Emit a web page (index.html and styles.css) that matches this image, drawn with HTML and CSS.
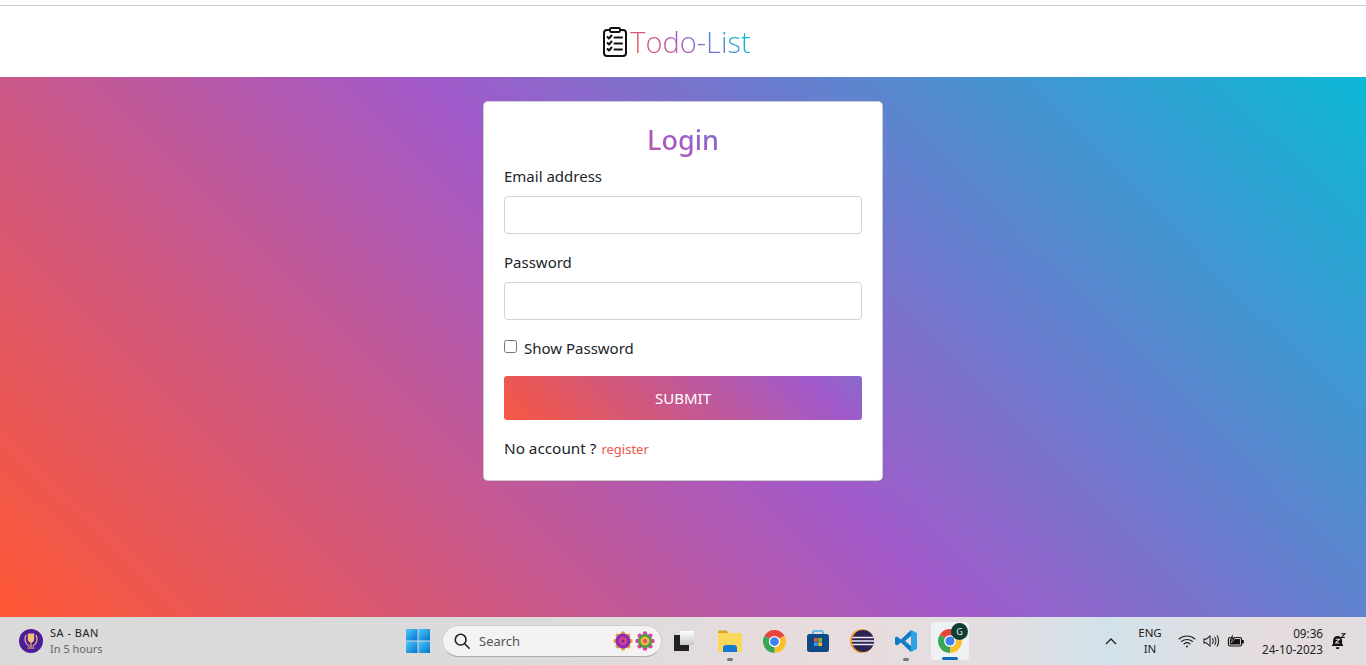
FILE: index.html
```html
<!DOCTYPE html>
<html lang="en">
<head>
    <meta charset="UTF-8">
    <meta name="viewport" content="width=device-width, initial-scale=1.0">
    <title>Todo-List</title>
    <link rel="stylesheet" href="styles.css">
</head>
<body>

    <svg class="defs" width="0" height="0">
        <defs>
            <linearGradient id="winBlue" x1="0" y1="0" x2="1" y2="1">
                <stop offset="0" stop-color="#4fc8f8"/>
                <stop offset="1" stop-color="#0573cf"/>
            </linearGradient>
            <linearGradient id="taskTile" x1="0" y1="0" x2="0" y2="1">
                <stop offset="0" stop-color="#fff"/>
                <stop offset="1" stop-color="#c9c9c9"/>
            </linearGradient>
            <symbol id="chrome" viewBox="0 0 24 24">
                <path d="M12 12L2.470 6.500A11 11 0 0 1 21.530 6.500Z" fill="#e5453a"/>
                <path d="M12 12L21.530 6.500A11 11 0 0 1 12 23Z" fill="#fbc02d"/>
                <path d="M12 12L12 23A11 11 0 0 1 2.470 6.500Z" fill="#3aa655"/>
                <circle cx="12" cy="12" r="5.400" fill="#fff"/>
                <circle cx="12" cy="12" r="4.200" fill="#3f82ee"/>
            </symbol>
            <symbol id="petals" viewBox="-10 -10 20 20">
                <circle r="2.200" cx="0" cy="-7.500"/>
                <circle r="2.200" cx="5.300" cy="-5.300"/>
                <circle r="2.200" cx="7.500" cy="0"/>
                <circle r="2.200" cx="5.300" cy="5.300"/>
                <circle r="2.200" cx="0" cy="7.500"/>
                <circle r="2.200" cx="-5.300" cy="5.300"/>
                <circle r="2.200" cx="-7.500" cy="0"/>
                <circle r="2.200" cx="-5.300" cy="-5.300"/>
            </symbol>
        </defs>
    </svg>

    <header class="site-header">
        <svg class="clipboard" viewBox="0 0 24 30" width="24" height="30" fill="none" stroke="#111" stroke-width="2" stroke-linecap="round" stroke-linejoin="round">
            <rect x="1" y="3" width="22" height="26" rx="3"/>
            <rect x="7" y="1" width="10" height="4" rx="1.200" fill="#fff"/>
            <path d="M4.500 10l1.500 1.500 2.500-3M11.500 10.500h7.500M4.500 16l1.500 1.500 2.500-3M11.500 16.500h7.500M4.500 22l1.500 1.500 2.500-3M11.500 22.500h7.500"/>
        </svg>
        <span class="brand">Todo-List</span>
    </header>

    <main class="hero">
        <div class="card">
            <h2 class="card-title">Login</h2>

            <label class="field-label" for="email">Email address</label>
            <input class="field" type="email" id="email">

            <label class="field-label field-label-second" for="password">Password</label>
            <input class="field" type="password" id="password">

            <label class="check-row" for="show">
                <input class="check" type="checkbox" id="show">
                <span>Show Password</span>
            </label>

            <button class="submit">SUBMIT</button>

            <p class="no-account">No account ? <a class="register" href="#">register</a></p>
        </div>
    </main>

    <footer class="taskbar">
        <div class="weather">
            <svg viewBox="0 0 24 24" width="24" height="24">
                <circle cx="12" cy="12" r="12" fill="#4c1d96"/>
                <path d="M8.800 4.500h6.400v5.500c0 2.200-1.300 3.600-3.200 3.600s-3.200-1.400-3.200-3.600z" fill="#f0c27a"/>
                <path d="M6.800 6.500c-1.800 3.500-.8 8 3.200 10.500M17.200 6.500c1.800 3.500.8 8-3.200 10.500M12 13.500v4M9 19h6" fill="none" stroke="#f0c27a" stroke-width="1.200" stroke-linecap="round"/>
            </svg>
            <div class="weather-text">
                <div class="weather-title">SA - BAN</div>
                <div class="weather-sub">In 5 hours</div>
            </div>
        </div>

        <div class="task-icons">
            <div class="slot">
                <svg viewBox="0 0 24 24" width="24" height="24" fill="url(#winBlue)">
                    <rect width="11.500" height="11.500"/>
                    <rect x="12.500" width="11.500" height="11.500"/>
                    <rect y="12.500" width="11.500" height="11.500"/>
                    <rect x="12.500" y="12.500" width="11.500" height="11.500"/>
                </svg>
            </div>
            <div class="search">
                <svg viewBox="0 0 20 20" width="18" height="18" fill="none" stroke="#222" stroke-width="1.800" stroke-linecap="round">
                    <circle cx="8.500" cy="8.500" r="6"/>
                    <path d="M13 13l5 5"/>
                </svg>
                <span class="search-text">Search</span>
                <div class="flowers">
                    <svg class="flower" viewBox="0 0 20 20" width="20" height="20">
                        <use href="#petals" width="20" height="20" fill="#e8a33a"/>
                        <circle cx="10" cy="10" r="7.500" fill="#8e2bb8"/>
                        <circle cx="10" cy="10" r="4" fill="#d4478a"/>
                        <circle cx="10" cy="10" r="1.500" fill="#7a1fa0"/>
                    </svg>
                    <svg class="flower" viewBox="0 0 20 20" width="20" height="20">
                        <use href="#petals" width="20" height="20" fill="#dd3ea4"/>
                        <circle cx="10" cy="10" r="7" fill="#43a047"/>
                        <circle cx="10" cy="10" r="4.500" fill="#f2b632"/>
                        <circle cx="10" cy="10" r="2" fill="#e0479c"/>
                    </svg>
                </div>
            </div>
            <div class="slot">
                <svg viewBox="0 0 22 22" width="22" height="22">
                    <rect x="1" y="5" width="15" height="16" fill="#222"/>
                    <rect x="7" y="1" width="14" height="14" fill="url(#taskTile)"/>
                </svg>
            </div>
            <div class="slot slot-first-app">
                <svg viewBox="0 0 26 24" width="26" height="24">
                    <path d="M1 3a1.500 1.500 0 0 1 1.500-1.500h7L12 4h-11z" fill="#d9a520"/>
                    <rect x="1" y="4" width="24" height="19" rx="1.500" fill="#fbd75b"/>
                    <path d="M6 23v-4a3 3 0 0 1 3-3h8a3 3 0 0 1 3 3v4z" fill="#1479d4"/>
                </svg>
                <span class="dot"></span>
            </div>
            <div class="slot">
                <svg width="25" height="25"><use href="#chrome"/></svg>
            </div>
            <div class="slot">
                <svg viewBox="0 0 24 24" width="24" height="24">
                    <path d="M7 6V3.500A1.500 1.500 0 0 1 8.500 2h7A1.500 1.500 0 0 1 17 3.500V6" fill="none" stroke="#3fb4ea" stroke-width="1.600"/>
                    <rect x="1" y="5" width="22" height="18" rx="2.500" fill="#0f4a86"/>
                    <rect x="8" y="9" width="3.700" height="3.700" fill="#e8553a"/>
                    <rect x="12.300" y="9" width="3.700" height="3.700" fill="#7cb93a"/>
                    <rect x="8" y="13.300" width="3.700" height="3.700" fill="#2f9bea"/>
                    <rect x="12.300" y="13.300" width="3.700" height="3.700" fill="#f7b731"/>
                </svg>
            </div>
            <div class="slot">
                <svg viewBox="0 0 24 24" width="24" height="24">
                    <circle cx="12" cy="12" r="12" fill="#f0a030"/>
                    <circle cx="13" cy="12" r="11" fill="#2c2255"/>
                    <path d="M2.500 8.500h21M2 12h22M2.500 15.500h21" stroke="#efeaf5" stroke-width="1.500"/>
                </svg>
            </div>
            <div class="slot">
                <svg viewBox="0 0 24 24" width="24" height="24">
                    <path d="M17 1L7 10.500 3 7.500 1 8.800v6.400L3 16.500l4-3L17 23v-6l-6-5 6-5z" fill="#0f7cc4"/>
                    <path d="M17 1l6 3v16l-6 3z" fill="#2aa3ea"/>
                </svg>
                <span class="dot"></span>
            </div>
            <div class="slot slot-active">
                <div class="active-box">
                    <svg width="26" height="26"><use href="#chrome"/></svg>
                    <span class="profile">G</span>
                    <span class="active-bar"></span>
                </div>
            </div>
        </div>

        <div class="tray">
            <svg class="caret" viewBox="0 0 12 8" width="12" height="8" fill="none" stroke="#222" stroke-width="1.300">
                <path d="M1 7l5-5 5 5"/>
            </svg>
            <div class="lang">ENG<br>IN</div>
            <div class="tray-icons">
                <svg viewBox="0 0 18 14" width="18" height="14" fill="none" stroke="#222" stroke-width="1.100" stroke-linecap="round">
                    <path d="M1 5c4.500-4 11.500-4 16 0M3.500 7.500c3-2.700 8-2.700 11 0M6 10c1.700-1.500 4.300-1.500 6 0"/>
                    <circle cx="9" cy="12.500" r="1" fill="#222" stroke="none"/>
                </svg>
                <svg viewBox="0 0 18 14" width="17" height="14" fill="none" stroke="#222" stroke-width="1.100" stroke-linecap="round" stroke-linejoin="round">
                    <path d="M1 5v4h2.500L7.500 12.500V1.500L3.500 5zM10 4.500c1 1.500 1 3.500 0 5M12.500 3c1.500 2.500 1.500 5.500 0 8M15 1.500c2 3.500 2 7.500 0 11"/>
                </svg>
                <svg viewBox="0 0 18 14" width="18" height="14">
                    <rect x="1.500" y="3.500" width="13" height="8.500" rx="1.500" fill="none" stroke="#111" stroke-width="1.200"/>
                    <rect x="3" y="5" width="10" height="5.500" fill="#111"/>
                    <rect x="15" y="6" width="1.800" height="3.500" fill="#111"/>
                    <path d="M6 0L2.500 5h3L4 9l5-5H6z" fill="#111" stroke="#e6dfe2" stroke-width=".5"/>
                </svg>
            </div>
            <div class="clock">09:36<br>24-10-2023</div>
            <svg class="bell" viewBox="0 0 16 18" width="15" height="17">
                <path d="M7 3a4.800 4.800 0 0 0-4.800 4.800V11L.8 13.800h12.400L11.800 11V7.800A4.800 4.800 0 0 0 7 3z" fill="#111"/>
                <path d="M5 15h4a2 2 0 0 1-4 0z" fill="#111"/>
                <path d="M5 6.500h4L5 10.500h4" fill="none" stroke="#e6dfe2" stroke-width="1.100"/>
                <path d="M11 .8h3.800L11 4.800h3.800" fill="none" stroke="#111" stroke-width="1.100"/>
            </svg>
        </div>
    </footer>

</body>
</html>
```

FILE: styles.css
```css
* {
    box-sizing: border-box;
}
html, body {
    height: 100%;
}
body {
    font-family: "Noto Sans", "Open Sans", sans-serif;
    background-color: white;
    color: #212529;
    margin: 0;
    display: flex;
    flex-direction: column;
    overflow: hidden;
}
.defs {
    position: absolute;
}
.site-header {
    flex: none;
    height: 72px;
    margin-top: 5px;
    padding: 1px 12px 0 0;
    border-top: 1px solid #ccc;
    display: flex;
    align-items: center;
    justify-content: center;
    gap: 3px;
    background: white;
}
.brand {
    font-family: "Open Sans", sans-serif;
    font-weight: 300;
    font-size: 29px;
    line-height: 30px;
    background: linear-gradient(45deg, #ff5733, #a259c9 45%, #0bb8d5 88%);
    -webkit-background-clip: text;
    background-clip: text;
    color: transparent;
}
.hero {
    flex: 1;
    padding-top: 24px;
    background: linear-gradient(45deg, #ff5733, #a259c9, #0bb8d5);
}
.card {
    width: 400px;
    height: 380px;
    margin: 0 auto;
    padding: 20px;
    background: white;
    border: 1px solid rgba(0, 0, 0, .2);
    border-radius: 5px;
}
.card-title {
    margin: 0 0 7px;
    padding-top: 1px;
    text-align: center;
    font-size: 27px;
    font-weight: 500;
    line-height: 34px;
    background: linear-gradient(45deg, #ff5733, #a259c9, #0bb8d5);
    -webkit-background-clip: text;
    background-clip: text;
    color: transparent;
}
.field-label {
    display: block;
    font-size: 15px;
    line-height: 24px;
    margin-bottom: 8px;
}
.field-label-second {
    margin-top: 16px;
}
.field {
    display: block;
    width: 100%;
    height: 38px;
    border: 1px solid #ced4da;
    border-radius: 4px;
    background: white;
}
.check-row {
    display: flex;
    align-items: center;
    gap: 7px;
    margin-top: 16px;
    font-size: 15px;
    line-height: 24px;
}
.check {
    width: 13px;
    height: 13px;
    margin: 0;
    position: relative;
    top: -2px;
}
.submit {
    display: block;
    width: 100%;
    height: 44px;
    margin-top: 16px;
    border: none;
    border-radius: 3px;
    color: white;
    font-family: inherit;
    font-size: 15px;
    background: linear-gradient(45deg, #ff5733 -8%, #a259c9 84%, #0bb8d5 176%);
}
.no-account {
    margin: 16px 0 0;
    font-size: 15.3px;
    line-height: 24px;
}
.register {
    margin-left: 1px;
    color: #f0564a;
    font-size: 13px;
    text-decoration: none;
}
.taskbar {
    height: 48px;
    flex: none;
    display: flex;
    align-items: center;
    background: linear-gradient(90deg, #dadada 0%, #dcdbdb 40%, #e8dcdd 60%, #e3dde0 72%, #d2e2ea 81%, #e6dcde 93%, #e0dcdf 100%);
    font-size: 11px;
    color: #222;
}
.weather {
    width: 396px;
    flex: none;
    display: flex;
    align-items: center;
    gap: 7px;
    padding-left: 19px;
}
.weather-text {
    line-height: 16px;
    font-size: 11px;
}
.weather-title {
    letter-spacing: .5px;
}
.weather-sub {
    color: #666;
}
.task-icons {
    display: flex;
    align-items: center;
}
.slot {
    width: 44px;
    height: 48px;
    display: flex;
    align-items: center;
    justify-content: center;
    position: relative;
}
.slot-first-app {
    margin-left: 2px;
}
.dot {
    position: absolute;
    left: 19px;
    bottom: 4px;
    width: 6px;
    height: 3px;
    border-radius: 2px;
    background: #777;
}
.search {
    width: 220px;
    height: 32px;
    margin-left: 2px;
    display: flex;
    align-items: center;
    gap: 8px;
    padding: 0 6px 0 10px;
    background: #f3f3f3;
    border: 1px solid #cfcfcf;
    border-bottom-color: #aaa;
    border-radius: 16px;
    font-size: 13px;
    color: #555;
}
.flowers {
    margin-left: auto;
    display: flex;
    gap: 2px;
}
.active-box {
    width: 38px;
    height: 38px;
    display: flex;
    align-items: center;
    justify-content: center;
    position: relative;
    background: #eef2f5;
    border-radius: 4px;
}
.profile {
    position: absolute;
    top: 1px;
    right: 1px;
    width: 17px;
    height: 17px;
    border-radius: 50%;
    background: #0f3d36;
    color: #e8f0ee;
    font-size: 9px;
    line-height: 17px;
    text-align: center;
}
.active-bar {
    position: absolute;
    left: 11px;
    bottom: 0;
    width: 16px;
    height: 3px;
    border-radius: 2px;
    background: #0a6cc4;
}
.tray {
    margin-left: auto;
    display: flex;
    align-items: center;
    padding-right: 20px;
}
.caret {
    margin-right: 15px;
}
.lang {
    width: 36px;
    text-align: center;
    line-height: 16px;
    font-size: 11.5px;
}
.tray-icons {
    display: flex;
    align-items: center;
    gap: 7px;
    margin-left: 10px;
}
.clock {
    width: 78px;
    text-align: right;
    line-height: 16px;
    font-size: 11.7px;
}
.bell {
    margin-left: 8px;
}
```
